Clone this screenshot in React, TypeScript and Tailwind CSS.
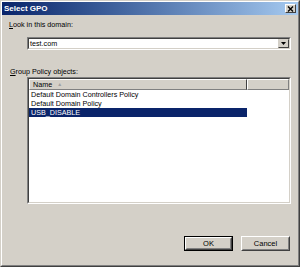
import React from 'react';

const font = { fontFamily: '"Liberation Sans", Arial, sans-serif' };

const rows = ['Default Domain Controllers Policy', 'Default Domain Policy', 'USB_DISABLE'];

const Btn: React.FC<{ label: string; def?: boolean }> = ({ label, def }) => (
  <div className={`w-[49px] h-[15px] ${def ? 'border border-black' : ''}`}>
    <div className="h-full w-full border border-t-white border-l-white border-r-[#404040] border-b-[#404040]">
      <div className="h-full w-full border border-transparent border-r-[#808080] border-b-[#808080] flex items-center justify-center text-[7.5px] text-black">
        {label}
      </div>
    </div>
  </div>
);

export default function App() {
  const selected = 2;

  return (
    <div style={font} className="w-[300px] h-[267px] bg-[#d4d0c8] border border-t-[#d4d0c8] border-l-[#d4d0c8] border-r-[#404040] border-b-[#404040]">
      <div className="h-full border border-t-white border-l-white border-r-[#808080] border-b-[#808080] flex flex-col">
        {/* Title bar */}
        <div className="h-[13px] bg-gradient-to-r from-[#0a246a] to-[#a6caf0] flex items-center justify-between pl-[2px] pr-[2px]">
          <span className="text-white font-bold text-[8px] leading-none">Select GPO</span>
          <div className="w-[11px] h-[9px] bg-[#d4d0c8] border border-t-white border-l-white border-r-[#404040] border-b-[#404040] flex items-center justify-center">
            <svg width="7" height="6" viewBox="0 0 7 6">
              <path d="M1 0.5 L6 5.5 M6 0.5 L1 5.5" stroke="black" strokeWidth="1.4" />
            </svg>
          </div>
        </div>

        <div className="pl-[7px] flex flex-col text-[7.2px] text-black">
          <div className="mt-[5px] h-[10px] leading-[10px]">
            <span className="underline">L</span>ook in this domain:
          </div>

          {/* Domain combo */}
          <div className="mt-[7px] ml-[18px] w-[264px] h-[13px] border border-t-[#808080] border-l-[#808080] border-r-white border-b-white">
            <div className="h-full border border-t-[#404040] border-l-[#404040] border-r-[#d4d0c8] border-b-[#d4d0c8] bg-white flex items-center justify-between">
              <span className="pl-[1px] leading-none">test.com</span>
              <div className="w-[11px] h-full bg-[#d4d0c8] border border-t-[#d4d0c8] border-l-[#d4d0c8] border-r-[#404040] border-b-[#404040] flex items-center justify-center">
                <svg width="5" height="3" viewBox="0 0 5 3">
                  <path d="M0 0 H5 L2.5 3 Z" fill="black" />
                </svg>
              </div>
            </div>
          </div>

          <div className="mt-[17px] h-[10px] leading-[10px] pl-[1px]">
            <span className="underline">G</span>roup Policy objects:
          </div>

          {/* GPO list */}
          <div className="ml-[18px] w-[264px] h-[127px] border border-t-[#808080] border-l-[#808080] border-r-white border-b-white">
            <div className="h-full border border-t-[#404040] border-l-[#404040] border-r-[#d4d0c8] border-b-[#d4d0c8] bg-white flex flex-col">
              <div className="h-[11px] flex shrink-0">
                <div className="w-[218px] h-full bg-[#d4d0c8] border border-t-white border-l-white border-r-[#404040] border-b-[#808080] flex items-center pl-[3px] gap-[5px]">
                  <span className="leading-none">Name</span>
                  <span className="text-[5px] text-[#a0a0a0] leading-none">▲</span>
                </div>
                <div className="flex-1 h-full bg-[#d4d0c8] border border-t-white border-l-white border-r-[#808080] border-b-[#808080]" />
              </div>
              {rows.map((r, i) => (
                <div
                  key={r}
                  className={`h-[9px] w-[218px] flex items-center pl-[2px] leading-none ${
                    i === selected ? 'bg-[#0a246a] text-white' : ''
                  }`}
                >
                  {r}
                </div>
              ))}
            </div>
          </div>
        </div>

        {/* Buttons */}
        <div className="mt-[32px] flex justify-end gap-[8px] pr-[8px]">
          <Btn label="OK" def />
          <Btn label="Cancel" />
        </div>
      </div>
    </div>
  );
}
